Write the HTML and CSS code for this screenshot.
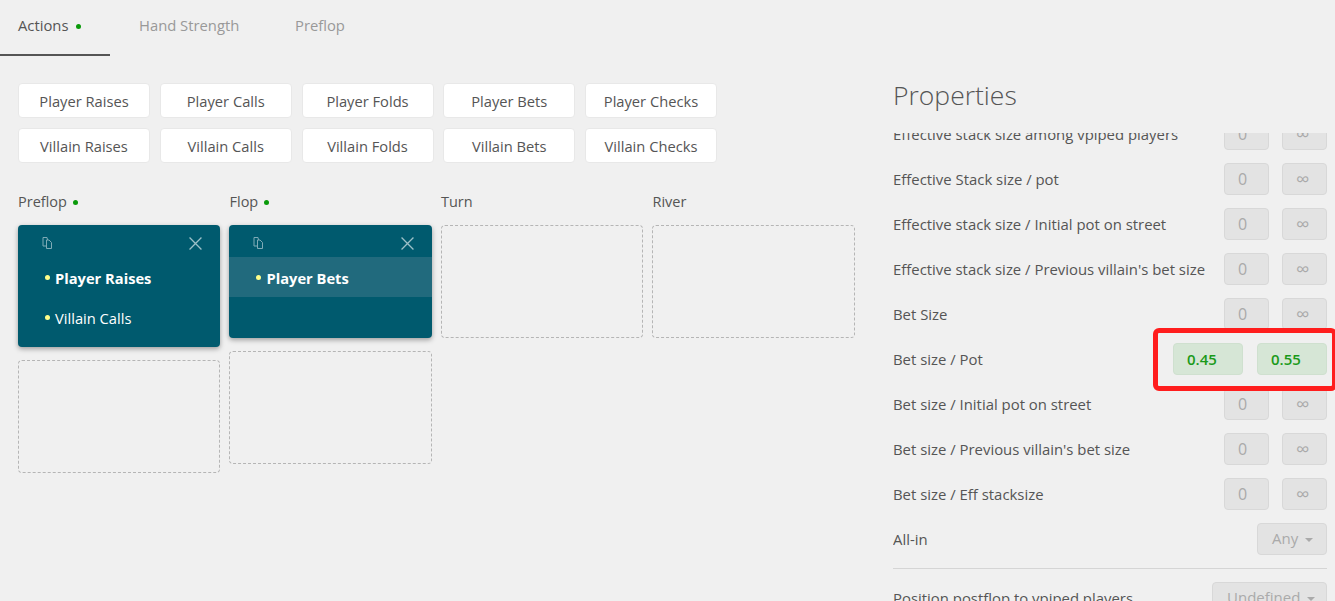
FILE: index.html
```html
<!DOCTYPE html>
<html lang="en">
<head>
<meta charset="utf-8">
<title>Actions</title>
<link rel="stylesheet" href="styles.css">
</head>
<body>
<div class="page">
  <main class="main">
    <nav class="tabs">
      <a class="tab active">Actions<span class="dot"></span></a>
      <a class="tab">Hand Strength</a>
      <a class="tab">Preflop</a>
    </nav>
    <section class="palette">
      <button class="chip">Player Raises</button>
      <button class="chip">Player Calls</button>
      <button class="chip">Player Folds</button>
      <button class="chip">Player Bets</button>
      <button class="chip">Player Checks</button>
      <button class="chip">Villain Raises</button>
      <button class="chip">Villain Calls</button>
      <button class="chip">Villain Folds</button>
      <button class="chip">Villain Bets</button>
      <button class="chip">Villain Checks</button>
    </section>
    <section class="streets">
      <div class="street">
        <h3 class="street-title">Preflop<span class="dot"></span></h3>
        <div class="card">
          <div class="card-head">
            <svg class="ic-copy" viewBox="0 0 11 12"><path d="M4 9H1V.5h4L5.500 3M4.500 3H7l2.500 2.500v6h-5z"/></svg>
            <svg class="ic-close" viewBox="0 0 12 12"><path d="M.5.5l11 11M11.500.5l-11 11"/></svg>
          </div>
          <div class="action"><span class="bullet"></span><b>Player Raises</b></div>
          <div class="action"><span class="bullet"></span>Villain Calls</div>
        </div>
        <div class="drop"></div>
      </div>
      <div class="street">
        <h3 class="street-title">Flop<span class="dot"></span></h3>
        <div class="card short">
          <div class="card-head">
            <svg class="ic-copy" viewBox="0 0 11 12"><path d="M4 9H1V.5h4L5.500 3M4.500 3H7l2.500 2.500v6h-5z"/></svg>
            <svg class="ic-close" viewBox="0 0 12 12"><path d="M.5.5l11 11M11.500.5l-11 11"/></svg>
          </div>
          <div class="action selected"><span class="bullet"></span><b>Player Bets</b></div>
        </div>
        <div class="drop"></div>
      </div>
      <div class="street">
        <h3 class="street-title">Turn</h3>
        <div class="drop first"></div>
      </div>
      <div class="street">
        <h3 class="street-title">River</h3>
        <div class="drop first"></div>
      </div>
    </section>
  </main>
  <aside class="props">
    <h2 class="props-title">Properties</h2>
    <div class="props-scroll">
      <div class="props-list">
        <div class="row"><span>Effective stack size among vpiped players</span><span class="field">0</span><span class="field inf">∞</span></div>
        <div class="row"><span>Effective Stack size / pot</span><span class="field">0</span><span class="field inf">∞</span></div>
        <div class="row"><span>Effective stack size / Initial pot on street</span><span class="field">0</span><span class="field inf">∞</span></div>
        <div class="row"><span>Effective stack size / Previous villain's bet size</span><span class="field">0</span><span class="field inf">∞</span></div>
        <div class="row"><span>Bet Size</span><span class="field">0</span><span class="field inf">∞</span></div>
        <div class="row"><span>Bet size / Pot</span><span class="field on">0.45</span><span class="field on">0.55</span></div>
        <div class="row"><span>Bet size / Initial pot on street</span><span class="field">0</span><span class="field inf">∞</span></div>
        <div class="row"><span>Bet size / Previous villain's bet size</span><span class="field">0</span><span class="field inf">∞</span></div>
        <div class="row"><span>Bet size / Eff stacksize</span><span class="field">0</span><span class="field inf">∞</span></div>
        <div class="row"><span>All-in</span><span class="select any">Any<i class="caret"></i></span></div>
        <hr class="rule">
        <div class="row"><span>Position postflop to vpiped players</span><span class="select undef">Undefined<i class="caret"></i></span></div>
      </div>
    </div>
  </aside>
</div>
<div class="callout"></div>
</body>
</html>
```
FILE: styles.css
```css
* { box-sizing: border-box; }
html, body { margin: 0; height: 100%; overflow: hidden; }
body {
  background: #f0f0f0;
  color: #555;
  font-family: "Open Sans", "Noto Sans", sans-serif;
  font-size: 14.700px;
  position: relative;
}
.page { display: flex; height: 601px; }
.main { width: 893px; flex: none; }

.tabs { display: flex; height: 56px; }
.tab {
  display: block;
  height: 56px;
  padding: 14px 0 0 18px;
  color: #999;
  font-size: 14.800px;
  line-height: 22px;
}
.tab:nth-child(1) { width: 110px; color: #555; border-bottom: 2px solid #555; }
.tab:nth-child(2) { width: 156px; padding-left: 29px; }
.tab:nth-child(3) { padding-left: 29px; }

.dot {
  display: inline-block;
  width: 5px;
  height: 5px;
  margin-left: 8px;
  border-radius: 50%;
  background: #0a9a0a;
  vertical-align: 2px;
}

.palette {
  display: grid;
  grid-template-columns: repeat(5, 132px);
  grid-auto-rows: 35px;
  gap: 10px 9.750px;
  margin: 27px 0 0 18px;
}
.chip {
  border: 1px solid #e8e8e8;
  border-radius: 4px;
  background: #fff;
  color: #555;
  font: inherit;
  padding: 1px 0 0;
}

.streets {
  display: grid;
  grid-template-columns: repeat(4, 202.300px);
  column-gap: 9.190px;
  margin: 27px 0 0 18px;
}
.street-title {
  margin: 0 0 11px;
  font-size: 14.500px;
  font-weight: 400;
  line-height: 24px;
  height: 24px;
}
.street-title .dot { margin-left: 6px; }

.card {
  height: 122px;
  margin-bottom: 13px;
  border-radius: 4px;
  background: #005a6e;
  color: #fff;
  box-shadow: 0 2px 5px rgba(0, 0, 0, .35);
}
.card.short { height: 113px; margin-bottom: 13px; }
.card-head {
  display: flex;
  justify-content: space-between;
  align-items: center;
  height: 32px;
  padding: 4px 18px 0 24px;
}
.ic-copy { width: 11px; height: 12px; fill: none; stroke: #7fabb6; stroke-width: 1; }
.ic-close { width: 13px; height: 13px; fill: none; stroke: #9cc0c8; stroke-width: 1.200; }
.action {
  display: flex;
  align-items: center;
  height: 40px;
  padding: 1px 0 0 27px;
}
.action.selected { background: #216a7d; }
.bullet {
  width: 5px;
  height: 5px;
  margin-right: 5px;
  border-radius: 50%;
  background: #ffff8a;
}

.drop {
  height: 113px;
  border: 1px dashed #b5b5b5;
  border-radius: 4px;
}

.props { flex: 1; min-width: 0; }
.props-title {
  margin: 0;
  padding-top: 76px;
  height: 133px;
  font-size: 26.500px;
  line-height: 38px;
  font-weight: 300;
  color: #555;
}
.props-scroll { height: 468px; overflow: hidden; }
.props-list { width: 434px; margin-top: -15px; font-size: 14.900px; }
.row {
  display: flex;
  align-items: center;
  gap: 13px;
  height: 32px;
  margin-bottom: 13px;
}
.row > span:first-child { flex: 1; white-space: nowrap; }
.field, .select {
  flex: none;
  height: 32px;
  border: 1px solid #d8d8d8;
  border-radius: 4px;
  background: #e3e3e3;
  color: #aaa;
  line-height: 30px;
}
.field { width: 45px; padding-left: 13px; font-size: 16px; }
.field.inf { padding-left: 13px; font-size: 19px; line-height: 31px; }
.field.on {
  width: 70px;
  padding-left: 13px;
  background: #d6e6d6;
  border-color: #cfe0cf;
  color: #1a9a1a;
  font-weight: 600;
  font-size: 15px;
}
.field.on + .field.on { margin-left: 1px; }
.select { text-align: left; font-size: 15px; line-height: 29px; }
.any { width: 70px; padding-left: 14px; }
.undef { width: 115px; padding-left: 14px; }
.caret {
  display: inline-block;
  margin-left: 7px;
  border: 4px solid transparent;
  border-top: 4px solid #aaa;
  border-bottom: 0;
  vertical-align: 2px;
}
.rule { margin: 0 0 13px; border: 0; border-top: 1px solid #d5d5d5; }

.callout {
  position: absolute;
  left: 1153px;
  top: 328px;
  width: 184px;
  height: 63px;
  border: 5px solid #ff1d1d;
  border-radius: 6px;
}
```
